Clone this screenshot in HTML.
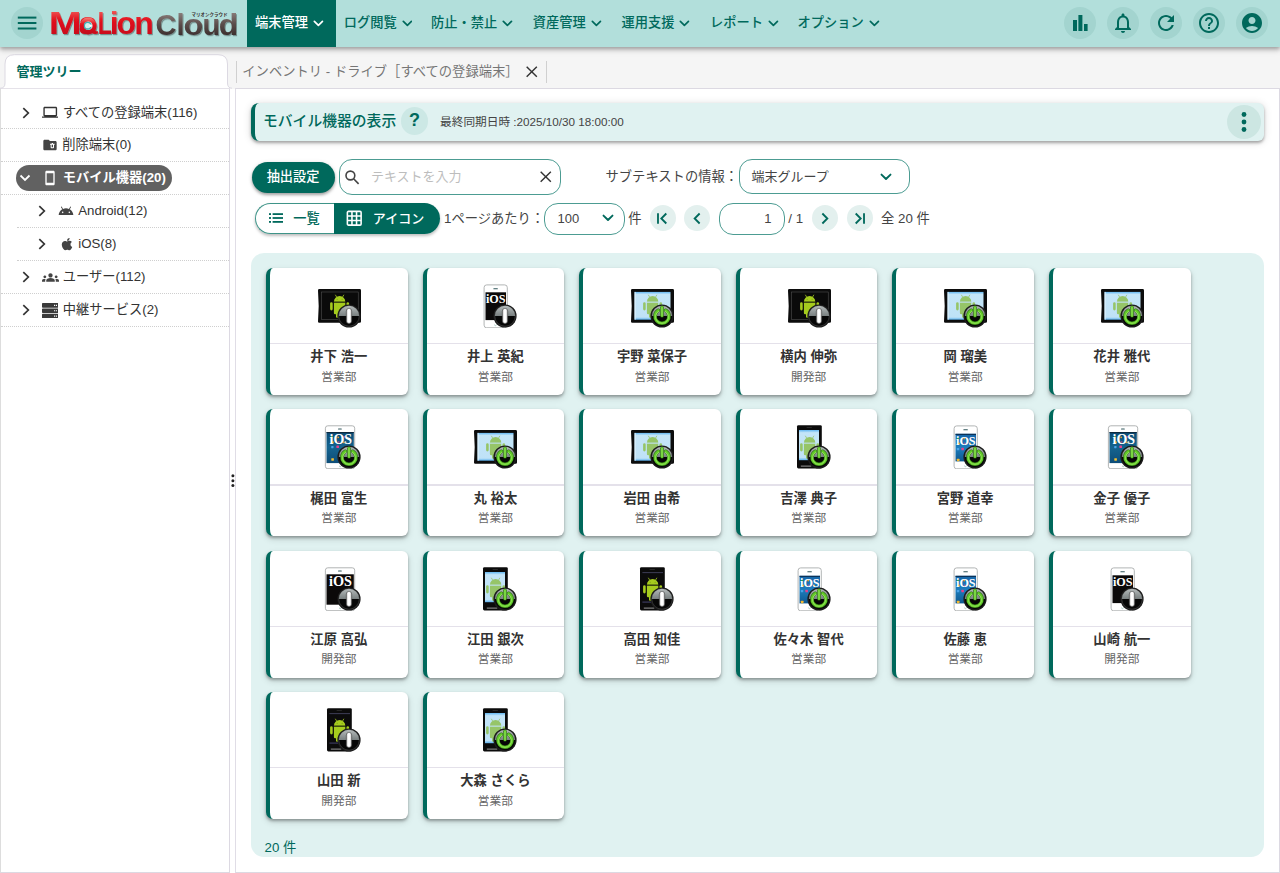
<!DOCTYPE html>
<html lang="ja">
<head>
<meta charset="utf-8">
<title>MaLion Cloud</title>
<style>
*{box-sizing:border-box;margin:0;padding:0}
html,body{width:1280px;height:873px;overflow:hidden}
body{position:relative;background:#f5f5f5;font-family:"Liberation Sans","Noto Sans CJK JP",sans-serif;color:#333;font-size:14px}
.abs{position:absolute}
/* header */
#hdr{position:absolute;left:0;top:0;width:1280px;height:47px;background:#b2dfdb;box-shadow:0 2px 4px rgba(0,0,0,.29),0 4px 6px rgba(0,0,0,.1);z-index:5}
.cbtn{position:absolute;width:32px;height:32px;border-radius:50%;background:#a3d4cf}
.cbtn svg{position:absolute;left:4px;top:4px;width:24px;height:24px;fill:#00695c}
.nav{position:absolute;top:0;height:47px;line-height:45px;font-size:13.25px;font-weight:500;color:#00695c;white-space:nowrap}
.nav svg{position:absolute;top:17.500px;width:10.800px;height:10.800px}
.nav.act{background:#00695c;color:#fff}
/* tabs */
#tab1{position:absolute;left:0;top:54px;width:232px;height:35px;z-index:2}
#tab1 span{position:absolute;left:16.500px;top:7.800px;line-height:20px;font-size:13px;font-weight:700;color:#00695c}
#lp{position:absolute;left:0;top:88px;width:230px;height:785px;background:#fff;border:1px solid #dcd9e2;border-left:1px solid #ddd}
#rp{position:absolute;left:235.300px;top:88px;width:1044.700px;height:785px;background:#fff;border:1px solid #dcd9e2;border-left:1.500px solid #e0dde6}
.trow{position:absolute;left:0;width:229px;height:33px;font-size:14px;color:#333;white-space:nowrap}
.trow .lbl{position:absolute;top:6px;line-height:20px}
.tl{font-size:13.250px;line-height:20px;white-space:nowrap;color:#333}
.tsep{position:absolute;height:0;border-top:1px dotted #cfcfcf}

.t13{font-size:13.300px;line-height:20px;white-space:nowrap}
#ttl{position:absolute;left:251px;top:103.400px;width:1013px;height:37.700px;background:#e0f2f1;border-left:4px solid #00695c;border-radius:8px 6px 6px 8px;box-shadow:0 2px 3px rgba(0,0,0,.3),0 1px 8px rgba(0,0,0,.14)}
.pill{position:absolute;background:#fff;border:1px solid #4c9c92}
.rbtn{position:absolute;width:26px;height:26px;border-radius:50%;background:#e3f0ee}
.rbtn svg{position:absolute;left:3.500px;top:3.500px;width:19px;height:19px}

.card{position:absolute;width:141.600px;height:127px;background:#fff;border-left:4px solid #00695c;border-radius:7px 6px 6px 7px;box-shadow:0 2px 3px rgba(0,0,0,.3),0 3px 7px rgba(0,0,0,.14)}
.card .dv{position:absolute;left:0;top:75.200px;width:137.600px;height:1.300px;background:#e4e1ea}
.card .nm{position:absolute;left:0;top:79.400px;width:137.600px;text-align:center;font-size:13.300px;line-height:20px;font-weight:700;color:#333;white-space:nowrap}
.card .sb{position:absolute;left:0;top:98.800px;width:137.600px;text-align:center;font-size:11.700px;line-height:20px;color:#666;white-space:nowrap}
.card svg{position:absolute;left:46.800px;top:16.200px;width:44px;height:44px;overflow:visible}
</style>
</head>
<body>
<div id="hdr">
<div class="cbtn" style="left:11.300px;top:7.400px"><svg viewBox="0 0 24 24"><rect x="2.800" y="5.600" width="18.600" height="2"/><rect x="2.800" y="11" width="18.600" height="2"/><rect x="2.800" y="16.500" width="18.600" height="2"/></svg></div>
<svg id="logo" class="abs" style="left:48px;top:4px" width="196" height="40" viewBox="0 0 196 40">
<defs>
<linearGradient id="gr" x1="0" y1="0" x2="0" y2="1"><stop offset="0" stop-color="#f58278"/><stop offset=".4" stop-color="#e3121f"/><stop offset="1" stop-color="#bd0a1a"/></linearGradient>
<linearGradient id="gc" x1="0" y1="0" x2="0" y2="1"><stop offset="0" stop-color="#9a8f8c"/><stop offset=".5" stop-color="#5a4c4a"/><stop offset="1" stop-color="#2e2222"/></linearGradient>
<filter id="ls" x="-5%" y="-10%" width="110%" height="130%"><feDropShadow dx="1" dy="1.2" stdDeviation=".7" flood-color="#000" flood-opacity=".35"/></filter>
</defs>
<g filter="url(#ls)" font-family="Liberation Sans,sans-serif" font-weight="700">
<g font-size="32" fill="url(#gr)">
<text transform="translate(.76,30.400) scale(1.235,1)">M</text>
<text transform="translate(30.600,30.400) scale(1.080,1)">a</text>
<text transform="translate(49.700,30.400) scale(.72,1)">L</text>
<text y="30.400" x="61.800 68.400 86.300">ion</text>
</g>
<circle cx="40.100" cy="21.900" r="8.500" fill="url(#gr)"/>
<g font-size="29" fill="url(#gc)">
<text y="30.700" x="107.400 128.600">Cl</text>
<text transform="translate(135.500,30.700) scale(1.120,1)">o</text>
<text y="30.700" x="154.500">u</text>
<text transform="translate(170.700,30.700) scale(1.100,1)">d</text>
</g>
</g>
<circle cx="40.300" cy="21.700" r="4.300" fill="#d4efec"/><circle cx="39.700" cy="21.700" r="3.300" fill="none" stroke="#3fb0b3" stroke-width="1.300"/><circle cx="42.700" cy="21.700" r="1.300" fill="#fff"/>
<text x="143.500" y="12" font-family="Liberation Sans,Noto Sans CJK JP,sans-serif" font-weight="700" font-size="4.600" textLength="36" lengthAdjust="spacingAndGlyphs" fill="#3a2f2f">マリオンクラウド</text>
</svg>
<div class="nav act" style="left:247px;width:88.5px"><span style="position:absolute;left:8px">端末管理</span><svg viewBox="0 0 12 12" style="left:66.0px"><path d="M1.5 3.8 L6 8.2 L10.5 3.8" fill="none" stroke="#fff" stroke-width="1.9" stroke-linecap="round" stroke-linejoin="round"/></svg></div>
<div class="nav" style="left:343.7px;width:73.0px"><span>ログ閲覧</span><svg viewBox="0 0 12 12" style="left:58.0px"><path d="M1.5 3.8 L6 8.2 L10.5 3.8" fill="none" stroke="#00695c" stroke-width="1.9" stroke-linecap="round" stroke-linejoin="round"/></svg></div>
<div class="nav" style="left:431px;width:86.25px"><span>防止・禁止</span><svg viewBox="0 0 12 12" style="left:71.25px"><path d="M1.5 3.8 L6 8.2 L10.5 3.8" fill="none" stroke="#00695c" stroke-width="1.9" stroke-linecap="round" stroke-linejoin="round"/></svg></div>
<div class="nav" style="left:532.8px;width:73.0px"><span>資産管理</span><svg viewBox="0 0 12 12" style="left:58.0px"><path d="M1.5 3.8 L6 8.2 L10.5 3.8" fill="none" stroke="#00695c" stroke-width="1.9" stroke-linecap="round" stroke-linejoin="round"/></svg></div>
<div class="nav" style="left:621.4px;width:73.0px"><span>運用支援</span><svg viewBox="0 0 12 12" style="left:58.0px"><path d="M1.5 3.8 L6 8.2 L10.5 3.8" fill="none" stroke="#00695c" stroke-width="1.9" stroke-linecap="round" stroke-linejoin="round"/></svg></div>
<div class="nav" style="left:710px;width:73.0px"><span>レポート</span><svg viewBox="0 0 12 12" style="left:58.0px"><path d="M1.5 3.8 L6 8.2 L10.5 3.8" fill="none" stroke="#00695c" stroke-width="1.9" stroke-linecap="round" stroke-linejoin="round"/></svg></div>
<div class="nav" style="left:797.6px;width:86.25px"><span>オプション</span><svg viewBox="0 0 12 12" style="left:71.25px"><path d="M1.5 3.8 L6 8.2 L10.5 3.8" fill="none" stroke="#00695c" stroke-width="1.9" stroke-linecap="round" stroke-linejoin="round"/></svg></div>

<div class="cbtn" style="left:1064px;top:7px"><svg viewBox="0 0 24 24"><rect x="5" y="9" width="4" height="11"/><rect x="10.4" y="4" width="4" height="16"/><rect x="16" y="13" width="3.6" height="7"/></svg></div>
<div class="cbtn" style="left:1107px;top:7px"><svg viewBox="0 0 24 24"><path d="M12 22c1.1 0 2-.9 2-2h-4c0 1.1.9 2 2 2zm6-6v-5c0-3.07-1.63-5.64-4.5-6.32V4c0-.83-.67-1.500-1.500-1.500s-1.500.67-1.500 1.500v.68C7.640 5.360 6 7.920 6 11v5l-2 2v1h16v-1l-2-2zm-2 1H8v-6c0-2.480 1.510-4.500 4-4.500s4 2.020 4 4.500v6z"/></svg></div>
<div class="cbtn" style="left:1150px;top:7px"><svg viewBox="0 0 24 24"><path d="M17.65 6.350C16.200 4.900 14.210 4 12 4c-4.420 0-7.990 3.580-7.990 8s3.570 8 7.990 8c3.730 0 6.840-2.550 7.730-6h-2.080c-.82 2.330-3.040 4-5.650 4-3.310 0-6-2.690-6-6s2.690-6 6-6c1.660 0 3.140.69 4.220 1.780L13 11h7V4l-2.350 2.350z"/></svg></div>
<div class="cbtn" style="left:1193px;top:7px"><svg viewBox="0 0 24 24"><path d="M11 18h2v-2h-2v2zm1-16C6.480 2 2 6.480 2 12s4.480 10 10 10 10-4.480 10-10S17.520 2 12 2zm0 18c-4.410 0-8-3.590-8-8s3.590-8 8-8 8 3.590 8 8-3.590 8-8 8zm0-14c-2.210 0-4 1.790-4 4h2c0-1.100.9-2 2-2s2 .9 2 2c0 2-3 1.750-3 5h2c0-2.250 3-2.500 3-5 0-2.210-1.790-4-4-4z"/></svg></div>
<div class="cbtn" style="left:1236px;top:7px"><svg viewBox="0 0 24 24"><path d="M12 2C6.480 2 2 6.480 2 12s4.480 10 10 10 10-4.480 10-10S17.520 2 12 2zm0 4c1.930 0 3.500 1.570 3.500 3.500S13.930 13 12 13s-3.500-1.570-3.500-3.500S10.070 6 12 6zm0 14c-2.030 0-4.430-.82-6.140-2.880C7.550 15.800 9.680 15 12 15s4.450.8 6.140 2.120C16.430 19.180 14.030 20 12 20z"/></svg></div>
</div>
<div id="tab1"><svg class="abs" style="left:0;top:0" width="232" height="35" viewBox="0 0 232 35"><path d="M0 34.200 C3.500 34.200 5 32.500 5 29 L5 10 Q5 .7 14.500 .7 L218 .7 Q227.500 .7 227.500 10 L227.500 29 C227.500 32.500 229 34.200 232 34.200" fill="#fff" stroke="#dcd9e2" stroke-width="1"/></svg><span>管理ツリー</span></div>
<div id="lp"></div>
<div id="rp"></div>
<div class="abs" style="left:230px;top:89px;width:5.300px;height:784px;background:#fff"></div>
<svg class="abs" style="left:230px;top:472px" width="6" height="18" viewBox="0 0 6 18" fill="#222"><circle cx="2.900" cy="3.700" r="1.500"/><circle cx="2.900" cy="8.700" r="1.500"/><circle cx="2.900" cy="13.600" r="1.500"/></svg>
<div id="tree">
<div class="tsep" style="left:1px;top:128px;width:228px"></div><div class="tsep" style="left:1px;top:161px;width:228px"></div><div class="tsep" style="left:1px;top:194px;width:228px"></div><div class="tsep" style="left:17px;top:227px;width:212px"></div><div class="tsep" style="left:17px;top:260px;width:212px"></div><div class="tsep" style="left:1px;top:293px;width:228px"></div><div class="tsep" style="left:1px;top:326px;width:228px"></div>
<svg class="abs" style="left:21.5px;top:106.5px" width="8" height="12" viewBox="0 0 8 12"><path d="M1.3 1.2 L6.3 6 L1.3 10.8" fill="none" stroke="#333" stroke-width="1.7" stroke-linecap="butt" stroke-linejoin="miter"/></svg><svg class="abs" style="left:41.5px;top:104.200px" width="16.500" height="16.500" viewBox="0 0 24 24" fill="#333"><path d="M20 18c1.1 0 1.990-.9 1.990-2L22 6c0-1.100-.9-2-2-2H4c-1.100 0-2 .9-2 2v10c0 1.100.9 2 2 2H0v2h24v-2h-4zM4 6h16v10H4V6z"/></svg><span class="abs tl" style="left:62.8px;top:102.5px;">すべての登録端末(116)</span>
<svg class="abs" style="left:42px;top:137px" width="16" height="16" viewBox="0 0 24 24" fill="#444"><path d="M22 8v10c0 1.100-.9 2-2 2H4c-1.100 0-2-.9-2-2V6c0-1.100.9-2 2-2h6l2 2h8c1.100 0 2 .9 2 2zm-5.500 2V9h-2v1H12v1.500h1v4c0 .83.670 1.500 1.500 1.500h2c.83 0 1.500-.67 1.500-1.500v-4h1V10h-2.500zm0 5.500h-2v-4h2v4z"/></svg><span class="abs tl" style="left:62.3px;top:135.2px;">削除端末(0)</span>
<div class="abs" style="left:15.500px;top:165.300px;width:156.500px;height:25.800px;border-radius:13px;background:#616161"></div><svg class="abs" style="left:19.2px;top:174.2px" width="12" height="8" viewBox="0 0 12 8"><path d="M1.5 1.5 L6 6 L10.5 1.500" fill="none" stroke="#fff" stroke-width="1.8" stroke-linecap="butt" stroke-linejoin="miter"/></svg><svg class="abs" style="left:42.300px;top:170px" width="16" height="16" viewBox="0 0 24 24" fill="#fff"><path d="M17 1.010L7 1c-1.100 0-2 .9-2 2v18c0 1.100.9 2 2 2h10c1.100 0 2-.9 2-2V3c0-1.100-.9-1.990-2-1.990zM17 19H7V5h10v14z"/></svg><span class="abs tl" style="left:62.8px;top:168.2px;color:#fff;font-weight:700">モバイル機器(20)</span>
<svg class="abs" style="left:37.8px;top:205px" width="8" height="12" viewBox="0 0 8 12"><path d="M1.3 1.2 L6.3 6 L1.3 10.8" fill="none" stroke="#333" stroke-width="1.7" stroke-linecap="butt" stroke-linejoin="miter"/></svg><svg class="abs" style="left:58.300px;top:203px" width="16" height="16" viewBox="0 0 24 24" fill="#444"><path d="M17.600 9.480l1.840-3.180c.16-.31.040-.69-.26-.85-.29-.15-.65-.06-.83.220l-1.880 3.240c-2.860-1.210-6.080-1.210-8.940 0L5.650 5.670c-.19-.29-.58-.38-.87-.2-.28.180-.37.540-.22.830L6.400 9.480C3.300 11.250 1.280 14.440 1 18h22c-.28-3.560-2.300-6.750-5.400-8.520zM7 15.250c-.69 0-1.250-.56-1.250-1.250s.56-1.250 1.250-1.250 1.250.56 1.250 1.250-.56 1.250-1.250 1.250zm10 0c-.69 0-1.250-.56-1.250-1.250s.56-1.250 1.250-1.250 1.250.56 1.250 1.250-.56 1.250-1.250 1.250z"/></svg><span class="abs tl" style="left:78.2px;top:201px;">Android(12)</span>
<svg class="abs" style="left:37.8px;top:238px" width="8" height="12" viewBox="0 0 8 12"><path d="M1.3 1.2 L6.3 6 L1.3 10.8" fill="none" stroke="#333" stroke-width="1.7" stroke-linecap="butt" stroke-linejoin="miter"/></svg><svg class="abs" style="left:60.500px;top:237.300px" width="12" height="14.200" viewBox="0 0 384 512" fill="#444"><path d="M318.700 268.700c-.2-36.700 16.400-64.400 50-84.800-18.800-26.900-47.200-41.700-84.700-44.600-35.500-2.800-74.300 20.700-88.500 20.700-15 0-49.400-19.700-76.400-19.700C63.300 141.200 4 184.800 4 273.500q0 39.300 14.400 81.200c12.800 36.700 59 126.700 107.200 125.200 25.200-.6 43-17.900 75.800-17.900 31.800 0 48.300 17.900 76.400 17.900 48.600-.7 90.400-82.500 102.600-119.300-65.200-30.700-61.700-90-61.700-91.900zm-56.600-164.200c27.300-32.400 24.800-61.900 24-72.500-24.100 1.400-52 16.400-67.900 34.900-17.500 19.800-27.800 44.300-25.600 71.900 26.100 2 49.900-11.400 69.500-34.300z"/></svg><span class="abs tl" style="left:78.2px;top:234px;">iOS(8)</span>
<svg class="abs" style="left:21.5px;top:271.3px" width="8" height="12" viewBox="0 0 8 12"><path d="M1.3 1.2 L6.3 6 L1.3 10.8" fill="none" stroke="#333" stroke-width="1.7" stroke-linecap="butt" stroke-linejoin="miter"/></svg><svg class="abs" style="left:41.500px;top:269px" width="17" height="17" viewBox="0 0 24 24" fill="#444"><path d="M12 12.750c1.630 0 3.070.39 4.240.9 1.080.48 1.760 1.560 1.760 2.730V18H6v-1.610c0-1.180.68-2.260 1.760-2.730 1.170-.52 2.610-.91 4.240-.91zM4 13c1.100 0 2-.9 2-2s-.9-2-2-2-2 .9-2 2 .9 2 2 2zm1.130 1.100c-.37-.06-.74-.1-1.130-.1-.99 0-1.930.21-2.780.58C.48 14.900 0 15.620 0 16.430V18h4.500v-1.610c0-.83.23-1.610.63-2.290zM20 13c1.100 0 2-.9 2-2s-.9-2-2-2-2 .9-2 2 .9 2 2 2zm4 3.430c0-.81-.48-1.530-1.220-1.850-.85-.37-1.790-.58-2.780-.58-.39 0-.76.040-1.130.1.400.68.630 1.460.630 2.290V18H24v-1.570zM12 6c1.660 0 3 1.340 3 3s-1.340 3-3 3-3-1.340-3-3 1.340-3 3-3z"/></svg><span class="abs tl" style="left:62.8px;top:267.3px;">ユーザー(112)</span>
<svg class="abs" style="left:21.5px;top:304.3px" width="8" height="12" viewBox="0 0 8 12"><path d="M1.3 1.2 L6.3 6 L1.3 10.8" fill="none" stroke="#333" stroke-width="1.7" stroke-linecap="butt" stroke-linejoin="miter"/></svg><svg class="abs" style="left:41.500px;top:302.500px" width="16.500" height="15.500" viewBox="0 0 22 20" preserveAspectRatio="none" fill="#3a3a3a"><path d="M1 0h20a1 1 0 0 1 1 1v4a1 1 0 0 1-1 1H1a1 1 0 0 1-1-1V1a1 1 0 0 1 1-1zm15 2.200v1.600h1.500V2.200zm2.500 0v1.600H20V2.200zM1 7h20a1 1 0 0 1 1 1v4a1 1 0 0 1-1 1H1a1 1 0 0 1-1-1V8a1 1 0 0 1 1-1zm15 2.200v1.600h1.500V9.200zm2.500 0v1.600H20V9.200zM1 14h20a1 1 0 0 1 1 1v4a1 1 0 0 1-1 1H1a1 1 0 0 1-1-1v-4a1 1 0 0 1 1-1zm15 2.200v1.600h1.500v-1.600zm2.500 0v1.600H20v-1.600z" fill-rule="evenodd"/></svg><span class="abs tl" style="left:62.8px;top:300.3px;">中継サービス(2)</span>
</div>
<div id="rpc">
<div class="abs" style="left:236px;top:60.500px;width:1px;height:22px;background:#d0d0d0"></div>
<span class="abs" style="left:242.300px;top:61.800px;font-size:13.300px;line-height:20px;color:#757575;white-space:nowrap">インベントリ - ドライブ［すべての登録端末］</span>
<svg class="abs" style="left:526.45px;top:66.05px" width="11.5" height="11.5" viewBox="0 0 12 12"><path d="M.7.700 L11.300 11.300 M11.300.700 L.7 11.300" fill="none" stroke="#333" stroke-width="1.5"/></svg>
<div class="abs" style="left:545.500px;top:60.500px;width:1px;height:22px;background:#d0d0d0"></div>
<div id="ttl"></div>
<span class="abs" style="left:263px;top:109.200px;font-size:14.800px;line-height:24px;font-weight:500;color:#00695c;white-space:nowrap">モバイル機器の表示</span>
<div class="abs" style="left:400.700px;top:107.400px;width:27.600px;height:27.600px;border-radius:50%;background:#cce8e5"></div>
<span class="abs" style="left:400.700px;top:107.400px;width:27.600px;text-align:center;font-size:18px;line-height:27.600px;font-weight:700;color:#00695c">?</span>
<span class="abs" style="left:440px;top:111.500px;font-size:11.700px;line-height:20px;color:#444;white-space:nowrap">最終同期日時 :2025/10/30 18:00:00</span>
<div class="abs" style="left:1227px;top:105.400px;width:33.800px;height:33.800px;border-radius:50%;background:#cce6e2"></div>
<svg class="abs" style="left:1240.900px;top:111.300px" width="6" height="22" viewBox="0 0 6 22" fill="#00695c"><circle cx="3" cy="3.500" r="2.400"/><circle cx="3" cy="11" r="2.400"/><circle cx="3" cy="18.500" r="2.400"/></svg>

<div class="abs" style="left:251.500px;top:161.500px;width:83px;height:31.200px;border-radius:16px;background:#00695c;box-shadow:0 2px 3px rgba(0,0,0,.3),0 1px 5px rgba(0,0,0,.12)"></div>
<span class="abs" style="left:251.500px;top:167px;width:83px;text-align:center;font-size:13.200px;line-height:20px;font-weight:500;color:#fff">抽出設定</span>
<div class="pill" style="left:338.500px;top:159px;width:222.500px;height:36.300px;border-radius:13px"></div>
<svg class="abs" style="left:343px;top:167px" width="20" height="20" viewBox="0 0 20 20" fill="none" stroke="#444" stroke-width="1.600"><circle cx="7.400" cy="8.500" r="4.400"/><path d="M10.600 11.800 L15.600 16.900" stroke-linecap="butt"/></svg>
<span class="abs" style="left:371px;top:167px;font-size:13px;line-height:20px;color:#bdbdbd;white-space:nowrap">テキストを入力</span>
<svg class="abs" style="left:540.25px;top:171.25px" width="11.5" height="11.5" viewBox="0 0 12 12"><path d="M.7.700 L11.300 11.300 M11.300.700 L.7 11.300" fill="none" stroke="#333" stroke-width="1.5"/></svg>
<span class="abs t13" style="left:605.500px;top:167px;color:#444">サブテキストの情報：</span>
<div class="pill" style="left:738.500px;top:159.200px;width:171.500px;height:35.200px;border-radius:13px"></div>
<span class="abs" style="left:751.500px;top:167px;font-size:13px;line-height:20px;color:#444;white-space:nowrap">端末グループ</span>
<svg class="abs" style="left:880.3px;top:173px" width="12" height="8" viewBox="0 0 12 8"><path d="M1.500 1.600 L6 6 L10.500 1.600" fill="none" stroke="#00695c" stroke-width="1.900" stroke-linecap="round" stroke-linejoin="round"/></svg>
<div class="abs" style="left:255px;top:203px;width:184.500px;height:31px;border-radius:15.500px;box-shadow:0 2px 3px rgba(0,0,0,.25);"></div>
<div class="abs" style="left:255px;top:203px;width:80px;height:31px;border-radius:15.500px 0 0 15.500px;background:#fff;border:1px solid #3f9488;border-right:none"></div>
<div class="abs" style="left:333.500px;top:203px;width:106px;height:31px;border-radius:0 15.500px 15.500px 0;background:#00695c"></div>
<svg class="abs" style="left:269px;top:212.200px" width="14" height="12" viewBox="0 0 14 12" fill="#00695c"><rect x="0" y="1.200" width="2" height="1.800"/><rect x="3.600" y="1.200" width="10.400" height="1.800"/><rect x="0" y="5.100" width="2" height="1.800"/><rect x="3.600" y="5.100" width="10.400" height="1.800"/><rect x="0" y="9" width="2" height="1.800"/><rect x="3.600" y="9" width="10.400" height="1.800"/></svg>
<span class="abs" style="left:293.300px;top:208.800px;font-size:13.200px;line-height:20px;font-weight:500;color:#00695c;white-space:nowrap">一覧</span>
<svg class="abs" style="left:345.500px;top:210px" width="16.500" height="16.500" viewBox="0 0 18 18" fill="none" stroke="#fff" stroke-width="1.700"><rect x="1.500" y="1.500" width="15" height="15" rx="1.200"/><path d="M6.500 1.500v15M11.500 1.500v15M1.500 6.500h15M1.500 11.500h15"/></svg>
<span class="abs" style="left:372.800px;top:208.800px;font-size:13px;line-height:20px;font-weight:500;color:#fff;white-space:nowrap">アイコン</span>
<span class="abs t13" style="left:444px;top:208.800px;color:#444">1ページあたり：</span>
<div class="pill" style="left:543.500px;top:202.500px;width:81px;height:32px;border-radius:14px"></div>
<span class="abs" style="left:557.500px;top:208.800px;font-size:13px;line-height:20px;color:#444">100</span>
<svg class="abs" style="left:602.3px;top:214.2px" width="12" height="8" viewBox="0 0 12 8"><path d="M1.500 1.600 L6 6 L10.500 1.600" fill="none" stroke="#00695c" stroke-width="1.900" stroke-linecap="round" stroke-linejoin="round"/></svg>
<span class="abs t13" style="left:628.300px;top:208.800px;color:#444">件</span>
<div class="rbtn" style="left:649.800px;top:205.200px"><svg viewBox="0 0 16 16" fill="none" stroke="#00695c" stroke-width="1.550"><path d="M4.200 3.500v9M11.200 3.800 L7 8 L11.200 12.200"/></svg></div>
<div class="rbtn" style="left:684.300px;top:205.200px"><svg viewBox="0 0 16 16" fill="none" stroke="#00695c" stroke-width="1.550"><path d="M9.800 3.800 L5.600 8 L9.800 12.200"/></svg></div>
<div class="pill" style="left:718.600px;top:202.500px;width:66px;height:32px;border-radius:14px"></div>
<span class="abs" style="left:730px;top:208.800px;width:41.500px;text-align:right;font-size:13px;line-height:20px;color:#444">1</span>
<span class="abs t13" style="left:788.300px;top:208.800px;color:#444">/ 1</span>
<div class="rbtn" style="left:811.600px;top:205.200px"><svg viewBox="0 0 16 16" fill="none" stroke="#00695c" stroke-width="1.550"><path d="M6.200 3.800 L10.400 8 L6.200 12.200"/></svg></div>
<div class="rbtn" style="left:846.700px;top:205.200px"><svg viewBox="0 0 16 16" fill="none" stroke="#00695c" stroke-width="1.550"><path d="M11.800 3.500v9M4.800 3.800 L9 8 L4.800 12.200"/></svg></div>
<span class="abs t13" style="left:881px;top:208.800px;color:#444">全 20 件</span>

<div id="grid" class="abs" style="left:251.200px;top:253.300px;width:1012.800px;height:603.500px;border-radius:13px;background:#e0f2f1"></div>
<svg width="0" height="0" style="position:absolute">
<defs>
<linearGradient id="gGloss" x1="0" y1="0" x2="0" y2="1"><stop offset="0" stop-color="#b4baba"/><stop offset="1" stop-color="#798080"/></linearGradient>
<linearGradient id="gScr" x1="0" y1="0" x2="0" y2="1"><stop offset="0" stop-color="#62b7f2"/><stop offset=".09" stop-color="#c4e5f8"/><stop offset=".91" stop-color="#bfe2f7"/><stop offset="1" stop-color="#5cb2ef"/></linearGradient>
<linearGradient id="gIos" x1="0" y1="0" x2="0" y2="1"><stop offset="0" stop-color="#0b4a73"/><stop offset=".5" stop-color="#15648f"/><stop offset="1" stop-color="#0d4d78"/></linearGradient>
<linearGradient id="gIosP" x1="0" y1="0" x2="0" y2="1"><stop offset="0" stop-color="#1565a8"/><stop offset=".5" stop-color="#1c7dbd"/><stop offset="1" stop-color="#10598f"/></linearGradient>
<linearGradient id="gBar" x1="0" y1="0" x2="1" y2="0"><stop offset="0" stop-color="#9a9a9a"/><stop offset=".3" stop-color="#fff"/><stop offset=".7" stop-color="#fff"/><stop offset="1" stop-color="#9a9a9a"/></linearGradient>
<g id="droid">
<path d="M16.900 17.200a5.700 5.700 0 0 1 11.400 0z"/>
<path d="M19.900 12.900L18.500 10.500M25.300 12.900L26.700 10.500" fill="none" stroke="currentColor" stroke-width=".8" stroke-linecap="round"/>
<path d="M16.900 17.900h11.400v10.400a1.300 1.300 0 0 1-1.300 1.300h-8.800a1.300 1.300 0 0 1-1.300-1.300z"/>
<rect x="13.100" y="17.600" width="2.600" height="8.200" rx="1.300"/><rect x="29.500" y="17.600" width="2.600" height="8.200" rx="1.300"/>
<rect x="19" y="27" width="2.600" height="6.300" rx="1.300"/><rect x="23.700" y="27" width="2.600" height="6.300" rx="1.300"/>
</g>
<g id="bOff">
<circle cx="32" cy="32" r="11.600" fill="#1c1c1c"/>
<circle cx="32" cy="32" r="10.200" fill="#060606" stroke="#4c4c4c" stroke-width=".5"/>
<path d="M21.800 32a10.200 10.200 0 0 1 20.400 0z" fill="url(#gGloss)"/>
<rect x="29.300" y="24.400" width="5.400" height="15" rx="2.700" fill="url(#gBar)" stroke="#3a3a3a" stroke-width=".5"/>
</g>
<g id="bOn">
<circle cx="32" cy="32" r="11.600" fill="#1c1c1c"/>
<circle cx="32" cy="32" r="10.200" fill="#060606"/>
<path d="M21.800 32a10.200 10.200 0 0 1 20.400 0z" fill="url(#gGloss)"/>
<path d="M28.300 26.300a7 7 0 1 0 7.400 0" fill="none" stroke="#2c6e10" stroke-width="3.600" stroke-linecap="round"/>
<path d="M28.300 26.300a7 7 0 1 0 7.400 0" fill="none" stroke="#62c92a" stroke-width="2.700" stroke-linecap="round"/>
<path d="M28.600 27.300a6.500 6.500 0 1 0 6.800 0" fill="none" stroke="#a4ee6a" stroke-width=".9" stroke-linecap="round" opacity=".8"/>
<path d="M32 23.300v8.600" fill="none" stroke="#2c6e10" stroke-width="3.400" stroke-linecap="round"/>
<path d="M32 23.300v8.600" fill="none" stroke="#62c92a" stroke-width="2.400" stroke-linecap="round"/>
<path d="M32 23.500v8" fill="none" stroke="#a4ee6a" stroke-width=".8" stroke-linecap="round" opacity=".9"/>
</g>
<g id="tabBody"><path d="M2.300 5.100h40.400a1.300 1.300 0 0 1 1.300 1.300v31.100a1.300 1.300 0 0 1-1.300 1.300H2.300a1.300 1.300 0 0 1-1.300-1.300l.7-15.500L1 6.400a1.300 1.300 0 0 1 1.300-1.300z" fill="#0c0c0c"/></g>
<g id="aphBody"><rect x="10" y=".2" width="24.800" height="43.200" rx="1.400" fill="#0b0b0b"/><rect x="13.800" y="40.600" width="10.500" height="1" fill="#9a9a9a"/><rect x="19.500" y="2" width="5.500" height=".8" rx=".4" fill="#333"/></g>
<g id="iphBody"><rect x="11.100" y=".9" width="23.200" height="42.900" rx="2.600" fill="#fff" stroke="#a9adad" stroke-width=".9"/><rect x="20.300" y="4.200" width="4.600" height="1.100" rx=".55" fill="#33585c"/><path d="M21.200 40.700l1.200 1 1.300-1" fill="none" stroke="#5a9a8a" stroke-width=".5"/></g>
<g id="ipdBody"><rect x="8.400" y=".8" width="29.300" height="42.900" rx="2.400" fill="#fff" stroke="#a9adad" stroke-width=".9"/><rect x="21" y="3.400" width="3.800" height="1" rx=".5" fill="#33585c"/><path d="M22 40.800l1.200 1 1.300-1" fill="none" stroke="#5a9a8a" stroke-width=".5"/></g>
<g id="dots"><circle cx="0" cy="0" r=".9" fill="#38b44a"/><circle cx="6.200" cy=".3" r=".9" fill="#e9a12b"/><circle cx="12.500" cy="-.2" r=".9" fill="#a24bb5"/><circle cx="1" cy="5.200" r=".9" fill="#f2a51e"/><circle cx="6.800" cy="5" r=".8" fill="#d94c8a"/><circle cx="12" cy="5.400" r=".9" fill="#f0b030"/></g>

<symbol id="iTabOff" viewBox="0 0 44 44"><use href="#tabBody"/><rect x="4.300" y="8" width="36.900" height="27.700" fill="#0a0a0a" stroke="#5a5a5a" stroke-width=".5"/><g transform="translate(0,.6)"><use href="#droid" fill="#a6cc1e" color="#a6cc1e"/><path d="M17 17.550h11.200" stroke="#0a0a0a" stroke-width=".5"/><circle cx="20.100" cy="14.700" r=".45" fill="#5d7a10"/><circle cx="25.100" cy="14.700" r=".45" fill="#5d7a10"/></g><use href="#bOff"/></symbol>
<symbol id="iTabOn" viewBox="0 0 44 44"><use href="#tabBody"/><rect x="4.500" y="7.900" width="36" height="27.800" fill="url(#gScr)"/><rect x="4.500" y="7.900" width="1.300" height="27.800" fill="#dff1fc" opacity=".8"/><g transform="translate(0,.6)"><use href="#droid" fill="#8fc050" color="#8fc050" opacity=".85"/><path d="M17 17.550h11.200" stroke="#c4e5f8" stroke-width=".5"/></g><use href="#bOn"/></symbol>
<symbol id="iAphOff" viewBox="0 0 44 44"><use href="#aphBody"/><rect x="12.400" y="5.300" width="20.600" height=".8" fill="#4a4a6a"/><rect x="12.400" y="34.500" width="20.600" height="1.200" fill="#3a3a5c"/><g transform="translate(0,.6)"><use href="#droid" fill="#a6cc1e" color="#a6cc1e"/><path d="M17 17.550h11.200" stroke="#0a0a0a" stroke-width=".5"/><circle cx="20.100" cy="14.700" r=".45" fill="#5d7a10"/><circle cx="25.100" cy="14.700" r=".45" fill="#5d7a10"/></g><use href="#bOff"/></symbol>
<symbol id="iAphOn" viewBox="0 0 44 44"><use href="#aphBody"/><rect x="12" y="5" width="20" height="30.200" fill="url(#gScr)"/><g transform="translate(0,.6)"><use href="#droid" fill="#8fc050" color="#8fc050" opacity=".85"/><path d="M17 17.550h11.200" stroke="#c4e5f8" stroke-width=".5"/></g><use href="#bOn"/></symbol>
<symbol id="iIphOff" viewBox="0 0 44 44"><use href="#iphBody"/><rect x="12.500" y="8.300" width="20.500" height="27.800" fill="#0b0909"/><text x="12.900" y="19.300" font-family="Liberation Serif,serif" font-weight="700" font-size="13.500" textLength="19.600" lengthAdjust="spacingAndGlyphs" fill="#fff">iOS</text><use href="#bOff"/></symbol>
<symbol id="iIphOn" viewBox="0 0 44 44"><use href="#iphBody"/><rect x="12.500" y="8.800" width="20.500" height="27.600" fill="url(#gIosP)"/><rect x="12.500" y="8.800" width="20.500" height="1.100" fill="#0a2d4f"/><use href="#dots" x="15" y="13.300"/><rect x="13.800" y="23.100" width="2.400" height="2.200" rx=".4" fill="#4aa3e8"/><rect x="18.400" y="22.800" width="2.500" height="2.400" rx=".5" fill="#e6408a"/><rect x="13.900" y="33.800" width="2.600" height="2.400" rx=".4" fill="#f5b82e"/><text x="13" y="19.800" font-family="Liberation Serif,serif" font-weight="700" font-size="13" textLength="19.600" lengthAdjust="spacingAndGlyphs" fill="#fff">iOS</text><use href="#bOn"/></symbol>
<symbol id="iIpdOff" viewBox="0 0 44 44"><use href="#ipdBody"/><rect x="9.500" y="7.300" width="27.300" height="30.400" fill="#0b0909"/><text x="12" y="19.300" font-family="Liberation Serif,serif" font-weight="700" font-size="14" textLength="23" lengthAdjust="spacingAndGlyphs" fill="#fff">iOS</text><use href="#bOff"/></symbol>
<symbol id="iIpdOn" viewBox="0 0 44 44"><use href="#ipdBody"/><rect x="9.500" y="7.100" width="27.300" height="31" fill="url(#gIos)"/><rect x="9.500" y="7.100" width="27.300" height="1" fill="#0a2438"/><use href="#dots" x="15" y="12"/><rect x="14.200" y="21" width="2.300" height="2.200" rx=".4" fill="#4aa3e8"/><rect x="19.400" y="20.600" width="2.600" height="2.500" rx=".6" fill="#e6408a"/><rect x="14.300" y="33.200" width="2.600" height="2.500" rx=".4" fill="#f5c030"/><text x="12.600" y="19.400" font-family="Liberation Serif,serif" font-weight="700" font-size="14" textLength="22.500" lengthAdjust="spacingAndGlyphs" fill="#fff">iOS</text><use href="#bOn"/></symbol>
</defs></svg>
<div id="cards">
<div class="card" style="left:266.0px;top:268.0px"><svg><use href="#iTabOff"/></svg><div class="dv"></div><div class="nm">井下 浩一</div><div class="sb">営業部</div></div>
<div class="card" style="left:422.6px;top:268.0px"><svg><use href="#iIphOff"/></svg><div class="dv"></div><div class="nm">井上 英紀</div><div class="sb">営業部</div></div>
<div class="card" style="left:579.2px;top:268.0px"><svg><use href="#iTabOn"/></svg><div class="dv"></div><div class="nm">宇野 菜保子</div><div class="sb">営業部</div></div>
<div class="card" style="left:735.8px;top:268.0px"><svg><use href="#iTabOff"/></svg><div class="dv"></div><div class="nm">横内 伸弥</div><div class="sb">開発部</div></div>
<div class="card" style="left:892.4px;top:268.0px"><svg><use href="#iTabOn"/></svg><div class="dv"></div><div class="nm">岡 瑠美</div><div class="sb">営業部</div></div>
<div class="card" style="left:1049.0px;top:268.0px"><svg><use href="#iTabOn"/></svg><div class="dv"></div><div class="nm">花井 雅代</div><div class="sb">営業部</div></div>
<div class="card" style="left:266.0px;top:409.3px"><svg><use href="#iIpdOn"/></svg><div class="dv"></div><div class="nm">梶田 富生</div><div class="sb">営業部</div></div>
<div class="card" style="left:422.6px;top:409.3px"><svg><use href="#iTabOn"/></svg><div class="dv"></div><div class="nm">丸 裕太</div><div class="sb">営業部</div></div>
<div class="card" style="left:579.2px;top:409.3px"><svg><use href="#iTabOn"/></svg><div class="dv"></div><div class="nm">岩田 由希</div><div class="sb">営業部</div></div>
<div class="card" style="left:735.8px;top:409.3px"><svg><use href="#iAphOn"/></svg><div class="dv"></div><div class="nm">吉澤 典子</div><div class="sb">営業部</div></div>
<div class="card" style="left:892.4px;top:409.3px"><svg><use href="#iIphOn"/></svg><div class="dv"></div><div class="nm">宮野 道幸</div><div class="sb">営業部</div></div>
<div class="card" style="left:1049.0px;top:409.3px"><svg><use href="#iIpdOn"/></svg><div class="dv"></div><div class="nm">金子 優子</div><div class="sb">営業部</div></div>
<div class="card" style="left:266.0px;top:550.6px"><svg><use href="#iIpdOff"/></svg><div class="dv"></div><div class="nm">江原 高弘</div><div class="sb">開発部</div></div>
<div class="card" style="left:422.6px;top:550.6px"><svg><use href="#iAphOn"/></svg><div class="dv"></div><div class="nm">江田 銀次</div><div class="sb">営業部</div></div>
<div class="card" style="left:579.2px;top:550.6px"><svg><use href="#iAphOff"/></svg><div class="dv"></div><div class="nm">高田 知佳</div><div class="sb">営業部</div></div>
<div class="card" style="left:735.8px;top:550.6px"><svg><use href="#iIphOn"/></svg><div class="dv"></div><div class="nm">佐々木 智代</div><div class="sb">営業部</div></div>
<div class="card" style="left:892.4px;top:550.6px"><svg><use href="#iIphOn"/></svg><div class="dv"></div><div class="nm">佐藤 恵</div><div class="sb">営業部</div></div>
<div class="card" style="left:1049.0px;top:550.6px"><svg><use href="#iIphOff"/></svg><div class="dv"></div><div class="nm">山崎 航一</div><div class="sb">開発部</div></div>
<div class="card" style="left:266.0px;top:691.9px"><svg><use href="#iAphOff"/></svg><div class="dv"></div><div class="nm">山田 新</div><div class="sb">開発部</div></div>
<div class="card" style="left:422.6px;top:691.9px"><svg><use href="#iAphOn"/></svg><div class="dv"></div><div class="nm">大森 さくら</div><div class="sb">営業部</div></div>
</div>
<span class="abs" style="left:264.500px;top:837.500px;font-size:13.300px;line-height:20px;color:#00695c;white-space:nowrap">20 件</span>
</div>
</body>
</html>
